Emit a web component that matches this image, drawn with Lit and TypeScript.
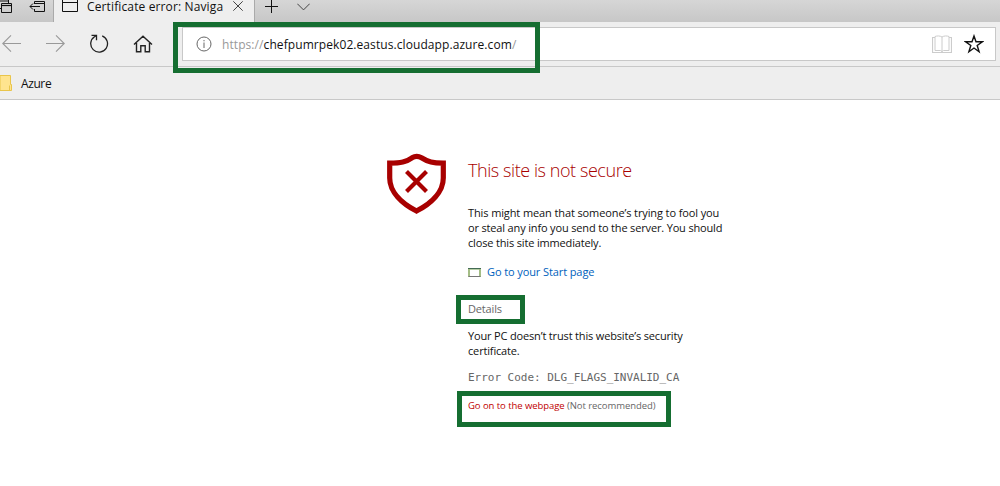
import { LitElement, html, css, svg } from "lit";
import { customElement } from "lit/decorators.js";

const icons = {
  tabsAside: svg`<svg width="53" height="22" viewBox="0 0 53 22" fill="none" stroke="#111" stroke-width="1">
    <path d="M0 8.500H1.500M8.500 0V3M0 1H9"/><path d="M1.500 3.500H11.500V12.500H1.500Z"/><path d="M1 5.500H12" stroke-width="1.200"/>
    <path d="M34.500 4V1.500H44.500V11.500H34.500V9M34 3.500H45M40 6.500H30M33 3.500L30 6.500L33 9.500"/></svg>`,
  page: svg`<svg width="16" height="12" viewBox="0 0 16 12" fill="none" stroke="#111"><path d="M.5 0V11.500H15.500V0M0 2.500H16"/></svg>`,
  close: svg`<svg width="10" height="12" viewBox="0 0 10 12" fill="none" stroke="#444"><path d="M.3 1.300L9.700 10.700M9.700 1.300L.3 10.700"/></svg>`,
  plus: svg`<svg width="13" height="13" viewBox="0 0 13 13" fill="none" stroke="#111"><path d="M6.500 0V13M0 6.500H13"/></svg>`,
  chevron: svg`<svg width="13" height="8" viewBox="0 0 13 8" fill="none" stroke="#444"><path d="M.3 .7L6.500 6.900L12.700 .7"/></svg>`,
  back: svg`<svg width="19" height="18" viewBox="0 0 19 18" fill="none" stroke="#999" stroke-width="1.100"><path d="M19 8.500H.8M9 .4L.8 8.500L9 16.700"/></svg>`,
  forward: svg`<svg width="19" height="18" viewBox="0 0 19 18" fill="none" stroke="#999" stroke-width="1.100"><path d="M0 8.500H18.200M10 .4L18.200 8.500L10 16.700"/></svg>`,
  refresh: svg`<svg width="20" height="20" viewBox="0 0 20 20" fill="none" stroke="#222" stroke-width="1.300"><path d="M13.200 1.900A8.400 8.400 0 1 1 5.500 2.700L7.300 1.500M2.500 1.300H7.500V6.200"/></svg>`,
  home: svg`<svg width="20" height="18" viewBox="0 0 20 18" fill="none" stroke="#222" stroke-width="1.400"><path d="M1 9.600L10 1.200L19 9.600M3.500 8V16.700H7.800V10.700H12.200V16.700H16.500V8"/></svg>`,
  info: svg`<svg width="16" height="16" viewBox="0 0 16 16" fill="none" stroke="#666"><circle cx="8" cy="8" r="7"/><path d="M8 6.500V12M8 4V5.300"/></svg>`,
  book: svg`<svg width="20" height="19" viewBox="0 0 20 19" fill="none" stroke="#ccc"><path d="M3 2.500H.5V17.500H19.500V2.500H17" stroke-width="1.200"/><path d="M3 15.500V1.500C5 .7 8 .7 10 2C12 .7 15 .7 17 1.500V15.500H11.500L10 16.500L8.500 15.500ZM10 2V17"/></svg>`,
  star: svg`<svg width="20" height="20" viewBox="0 0 20 20" fill="none" stroke="#111" stroke-width="1.400"><path d="M10 2L12 7.800H18.300L13.200 11.500L15.100 17.700L10 14L4.900 17.700L6.800 11.500L1.700 7.800H8Z"/></svg>`,
  folder: svg`<svg width="12" height="17" viewBox="0 0 12 17"><path d="M0 .5H10.500V9.500H11.500V15.500H0Z" fill="#ffe48f" stroke="#e9c54b"/><path d="M9.500 15V10.500" stroke="#e9c54b"/></svg>`,
  shield: svg`<svg width="60" height="62" viewBox="0 0 60 62" fill="none" stroke="#a80000"><path d="M2.700 10.200C14 10.200 19 9 25 4.800Q29.700 2 34.500 4.800C41 9 46 10.200 56.300 10.200V25C56.300 39 44 50.500 29.500 58C15 50.500 2.700 39 2.700 25Z" stroke-width="5.200"/><path d="M19.500 18.500L39.500 38.500M39.500 18.500L19.500 38.500" stroke-width="4.200"/></svg>`,
  start: svg`<svg width="13" height="11" viewBox="0 0 13 11" fill="none"><path d="M1 2V10M12 2V10" stroke="#86a85f" stroke-width="1.500"/><path d="M.5 9.500H12.500" stroke="#777"/><path d="M0 1.500H13" stroke="#446b54"/><path d="M2 2.500H11" stroke="#b5cda5"/></svg>`,
};

@customElement("app-root")
export class AppRoot extends LitElement {
  static styles = css`
    :host { display: block; position: relative; width: 1000px; height: 486px; overflow: hidden; background: #fff; color: #111; font-family: "Open Sans", "Noto Sans", sans-serif; }
    * { box-sizing: border-box; }
    svg { display: block; flex: none; }
    .tabs { display: flex; height: 22px; background: linear-gradient(#d6d6d6, #c7c7c7); }
    .aside { width: 54px; border-right: 1px solid #aaa; }
    .tab { display: flex; width: 201px; padding-left: 8px; background: #eee; border-right: 1px solid #aaa; }
    .tabtitle { width: 146px; margin-left: 9px; font-size: 12px; line-height: 14px; letter-spacing: .13px; white-space: nowrap; }
    .plus { margin: 0 0 0 10px; }
    .chev { margin: 3px 0 0 19px; }
    .nav { display: flex; height: 45px; background: #eee; border-bottom: 1px solid #c8c8c8; padding: 5px 4px 0 2px; }
    .tools { display: flex; align-items: center; width: 180px; height: 34px; }
    .tools .fwd { margin-left: 25px; }
    .tools .ref { margin-left: 24px; }
    .tools .home { margin-left: 24px; }
    .address { display: flex; align-items: center; flex: 1; height: 34px; background: #fff; border: 1px solid #c8c8c8; padding: 0 11px 0 13px; }
    .url { flex: 1; margin-left: 10px; font-size: 12px; line-height: 16px; padding-top: 2px; letter-spacing: .08px; color: #999; white-space: nowrap; }
    .url b { font-weight: 400; color: #111; }
    .star { margin-left: 12px; }
    .favs { display: flex; align-items: center; height: 33px; background: #eee; border-bottom: 1px solid #c8c8c8; font-size: 12px; line-height: 16px; }
    .favs span { margin-left: 9px; padding-top: 2px; letter-spacing: -.4px; }
    .page { display: flex; padding: 53px 0 0 387px; }
    .copy { margin-left: 21px; width: 300px; font-size: 11px; line-height: 15px; white-space: nowrap; letter-spacing: -.16px; }
    .copy > div { height: 15px; }
    .copy > .heading { margin-top: 4px; height: 26px; font-size: 18px; line-height: 26px; font-weight: 300; color: #a80000; margin-bottom: 22px; letter-spacing: -.43px; }
    .copy > .l1 { letter-spacing: -.11px; }
    .copy > .link { display: flex; align-items: center; gap: 6px; color: #0062bd; margin-top: 14px; letter-spacing: -.1px; }
    .link svg { margin-top: 2px; }
    .copy > .details { color: #666; margin-top: 22px; }
    .copy > .trust { margin-top: 12px; }
    .copy > .code { color: #666; margin-top: 12px; font-family: "DejaVu Sans Mono", monospace; letter-spacing: -.02px; }
    .copy > .go { color: #666; font-size: 9.5px; margin-top: 13px; letter-spacing: -.06px; }
    .go span { color: #c00000; }
    .mark { position: absolute; border: 5px solid #156e31; pointer-events: none; }
    .m1 { left: 173px; top: 22px; width: 367px; height: 51px; }
    .m2 { left: 456px; top: 295px; width: 69px; height: 29px; }
    .m3 { left: 457px; top: 391px; width: 214px; height: 36px; }
  `;

  render() {
    return html`
      <div class="tabs">
        <div class="aside">${icons.tabsAside}</div>
        <div class="tab">${icons.page}<span class="tabtitle">Certificate error: Naviga</span><span class="x">${icons.close}</span></div>
        <span class="plus">${icons.plus}</span><span class="chev">${icons.chevron}</span>
      </div>
      <div class="nav">
        <div class="tools">${icons.back}<span class="fwd">${icons.forward}</span><span class="ref">${icons.refresh}</span><span class="home">${icons.home}</span></div>
        <div class="address">${icons.info}<span class="url">https://<b>chefpumrpek02.eastus.cloudapp.azure.com</b>/</span>${icons.book}<span class="star">${icons.star}</span></div>
      </div>
      <div class="favs">${icons.folder}<span>Azure</span></div>
      <div class="page">
        ${icons.shield}
        <div class="copy">
          <div class="heading">This site is not secure</div>
          <div class="l1">This might mean that someone’s trying to fool you</div>
          <div class="l2">or steal any info you send to the server. You should</div>
          <div class="l3">close this site immediately.</div>
          <div class="link">${icons.start}<span>Go to your Start page</span></div>
          <div class="details">Details</div>
          <div class="trust">Your PC doesn’t trust this website’s security</div>
          <div class="l5">certificate.</div>
          <div class="code">Error Code: DLG_FLAGS_INVALID_CA</div>
          <div class="go"><span>Go on to the webpage</span> (Not recommended)</div>
        </div>
      </div>
      <div class="mark m1"></div><div class="mark m2"></div><div class="mark m3"></div>
    `;
  }
}
